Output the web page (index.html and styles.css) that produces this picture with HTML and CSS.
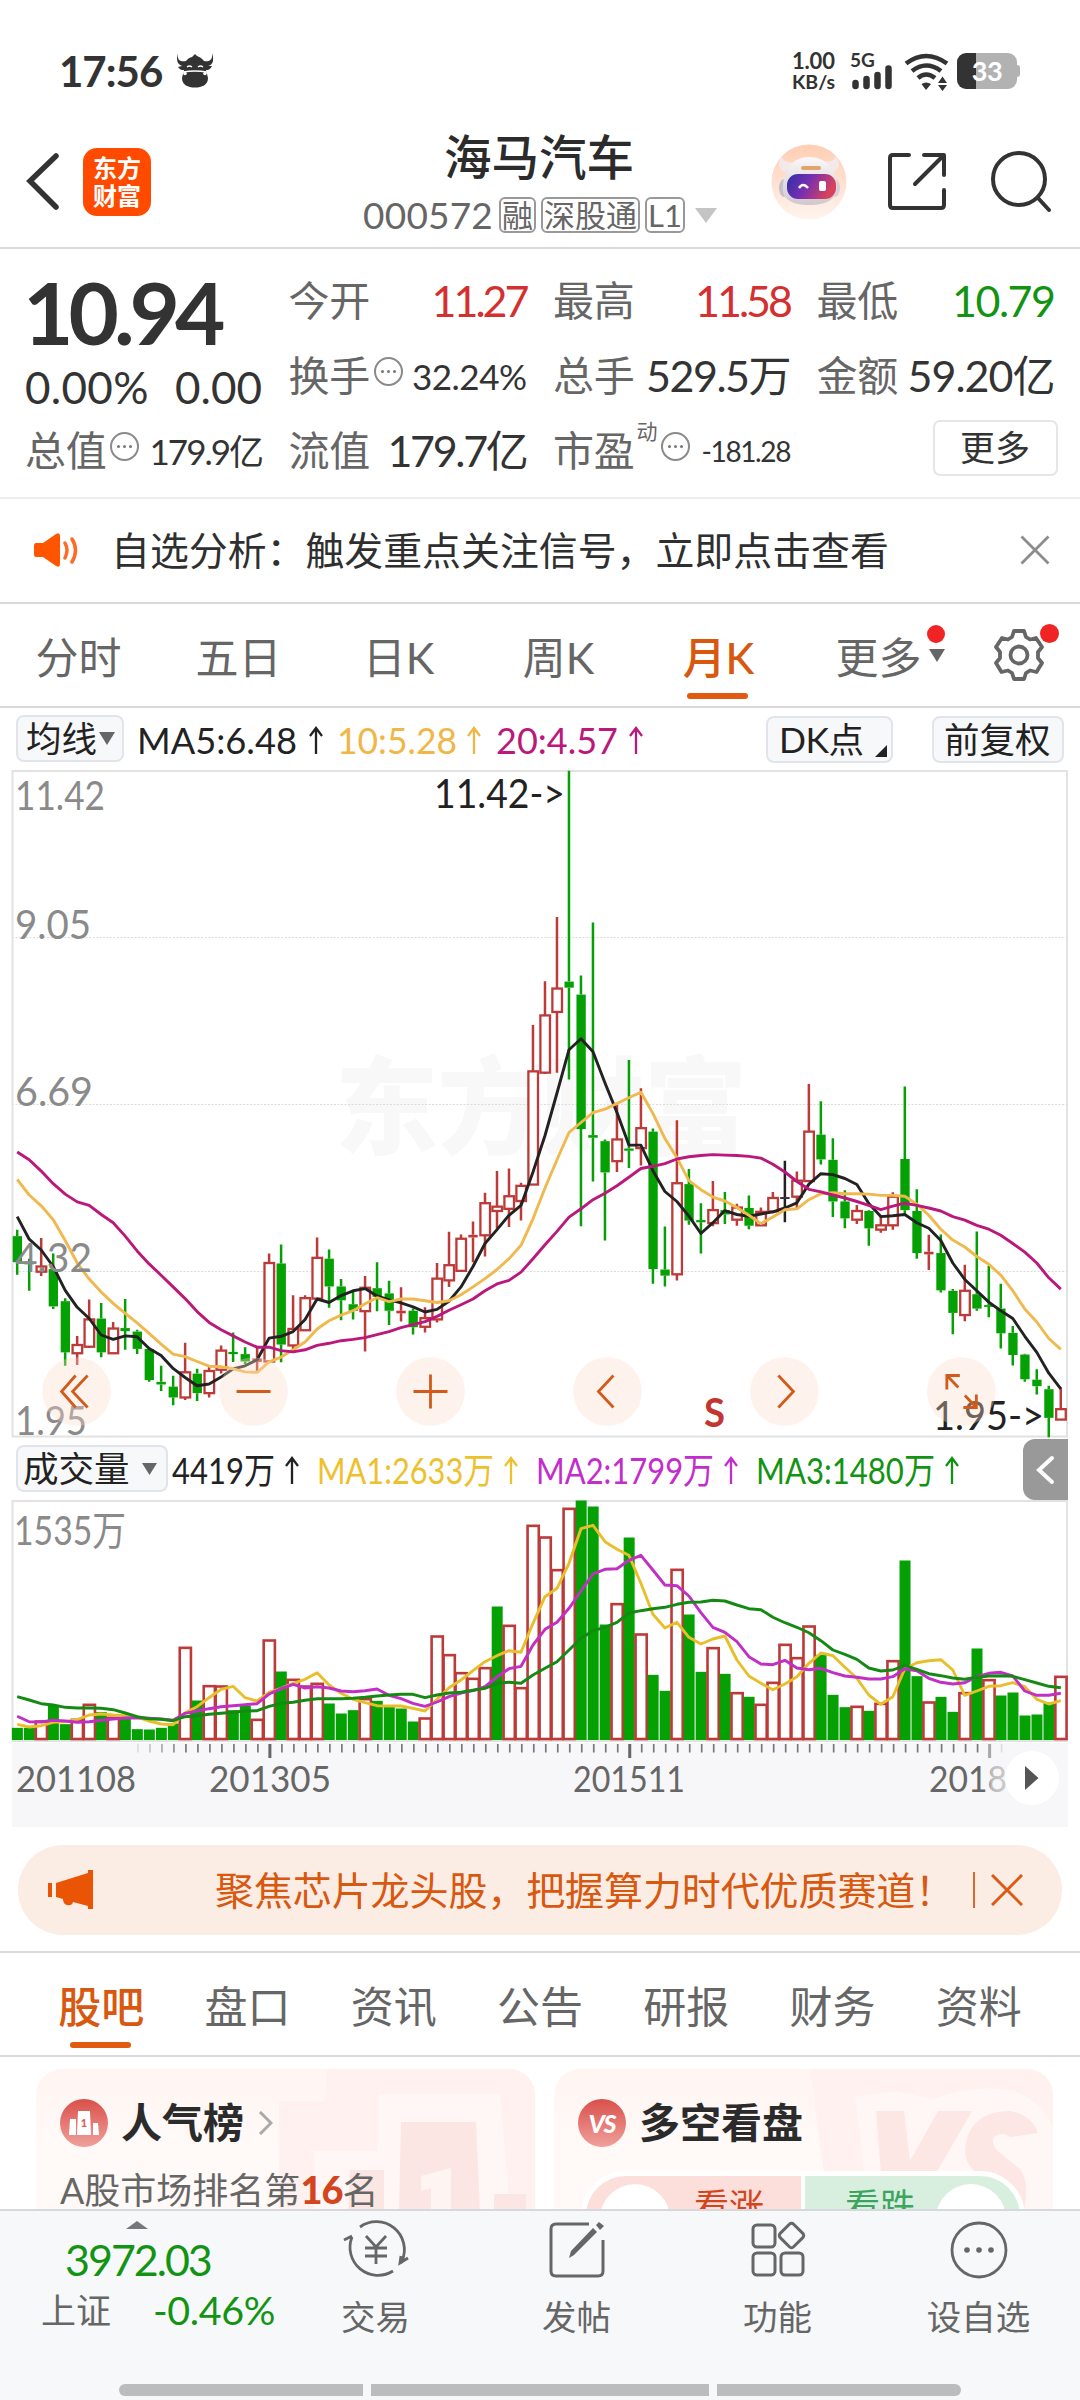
FILE: index.html
```html
<!DOCTYPE html>
<html lang="zh-CN">
<head>
<meta charset="utf-8">
<title>海马汽车 000572</title>
<link rel="stylesheet" href="styles.css">
</head>
<body>
<div class="app">

<header class="status">
  <div class="status-left">
    <span class="clock">17:56</span>
    <svg class="bull" width="36" height="36" viewBox="0 0 36 36" fill="#333">
      <path d="M1 0C0 7 3 9 9 8C13 3 15 5 16 3L18 1L20 3C22 4 24 4 27 8C33 9 36 6 35 0C38 8 35 12 31 13H35C33 17 31 17 29 17L31 25C31 32 25 34.500 18 34.500S5 32 5 25L7 17C5 17 3 17 1 14L5 13C0 11-1 7 1 0Z"/>
      <path d="M10 14Q12.500 12 15 14M21 14Q23.500 12 26 14M6 19Q18 17 30 19" stroke="#fff" fill="none" stroke-width="1.300"/>
      <circle cx="8" cy="20.500" r="1.800" fill="#fff"/><circle cx="28" cy="20.500" r="1.800" fill="#fff"/>
    </svg>
  </div>
  <div class="status-right">
    <div class="speed"><b>1.00</b><b>KB/s</b></div>
    <div class="signal"><b>5G</b>
      <svg width="42" height="26" viewBox="0 0 42 26" stroke="#333" stroke-width="6.500" stroke-linecap="round"><path d="M4.500 19V22M15.500 15V22M26.500 11V22M37.500 4.500V22"/></svg>
    </div>
    <svg class="wifi" width="46" height="38" viewBox="0 0 46 38" fill="none" stroke="#333" stroke-width="4.500">
      <path d="M2 10.500Q22 -4.500 43 10.500M8 18Q22 7 37 18M14 25Q22 18 31 25"/>
      <path d="M17.500 31Q22 28 27 31L22 37ZM34 30L38.500 23.500L43 30ZM34 32L38.500 38L43 32Z" fill="#333" stroke="none"/>
    </svg>
    <div class="battery"><b>33</b></div>
  </div>
</header>

<nav class="nav">
  <div class="nav-left">
    <svg width="36" height="60" viewBox="0 0 36 60" fill="none" stroke="#333" stroke-width="5.500" stroke-linecap="round"><path d="M31 4L5 29L31 55"/></svg>
    <div class="logo"><span>东方</span><span>财富</span></div>
  </div>
  <div class="nav-title">
    <div class="name">海马汽车</div>
    <div class="code"><span class="num">000572</span><i>融</i><i>深股通</i><i>L1</i><svg width="22" height="15"><path d="M0 0H22L11 15Z" fill="#c4c4c4"/></svg></div>
  </div>
  <div class="nav-right">
    <svg width="76" height="76" viewBox="0 0 76 76">
      <defs>
        <linearGradient id="halo" x1="0" y1="0" x2="0" y2="1"><stop offset="0" stop-color="#ffcdb3"/><stop offset="1" stop-color="#fff4ee"/></linearGradient>
        <linearGradient id="visor" x1="0" y1="0" x2="1" y2="0.300"><stop offset="0" stop-color="#2c2fa8"/><stop offset=".5" stop-color="#7a2fb0"/><stop offset="1" stop-color="#d8425c"/></linearGradient>
        <linearGradient id="shell" x1="0" y1="0" x2="0" y2="1"><stop offset="0" stop-color="#fbf8f8"/><stop offset="1" stop-color="#cfc8cf"/></linearGradient>
      </defs>
      <circle cx="38" cy="38" r="37.500" fill="url(#halo)"/>
      <path d="M11 12C6 18 7 26 14 28L22 18C16 19 12 17 11 12ZM64 12C70 18 69 26 62 28L54 17C60 18 63 17 64 12Z" fill="#f2e9e8"/>
      <ellipse cx="13" cy="44" rx="5" ry="9" fill="#c4bfca"/><ellipse cx="64" cy="44" rx="5" ry="9" fill="#d8d0d5"/>
      <path d="M38 13C55 13 65 25 66 42C67 55 55 61 39 61C22 61 10 56 12 42C13 25 22 13 38 13Z" fill="url(#shell)"/>
      <rect x="30" y="22" width="20" height="4" rx="2" fill="#e0a56a"/>
      <rect x="16" y="30" width="49" height="25" rx="11" fill="url(#visor)"/>
      <path d="M28 44Q32 38 37 44" stroke="#fff" stroke-width="2.500" fill="none"/><rect x="48" y="37" width="7" height="10" rx="2" fill="#fff"/>
    </svg>
    <svg width="60" height="60" viewBox="0 0 60 60" fill="none" stroke="#333" stroke-width="4" stroke-linecap="round" stroke-linejoin="round"><path d="M22 3H6Q3 3 3 6V53Q3 56 6 56H54Q57 56 57 53V38M37 3H57V23M56 4L28 32"/></svg>
    <svg width="62" height="62" viewBox="0 0 62 62" fill="none" stroke="#333" stroke-width="4" stroke-linecap="round"><circle cx="29" cy="28" r="26"/><path d="M48 47L59 59"/></svg>
  </div>
</nav>

<section class="quote">
  <div class="last">
    <div class="price">10.94</div>
    <div class="change"><span>0.00%</span><span>0.00</span></div>
  </div>
  <div class="cell"><label>今开</label><span class="v up">11.27</span></div>
  <div class="cell"><label>最高</label><span class="v up">11.58</span></div>
  <div class="cell"><label>最低</label><span class="v down">10.79</span></div>
  <div class="cell"><label>换手</label><em class="info"></em><span class="v mid">32.24%</span></div>
  <div class="cell"><label>总手</label><span class="v">529.5万</span></div>
  <div class="cell"><label>金额</label><span class="v wide">59.20亿</span></div>
  <div class="cell"><label>总值</label><em class="info"></em><span class="v mid2">179.9亿</span></div>
  <div class="cell"><label>流值</label><span class="v tight">179.7亿</span></div>
  <div class="cell"><label>市盈</label><sup>动</sup><em class="info"></em><span class="v small">-181.28</span></div>
  <div class="cell end"><span class="more">更多</span></div>
</section>

<section class="notice">
  <svg width="46" height="36" viewBox="0 0 46 36"><path d="M2 11Q0 11 0 14V22Q0 25 2 25H9L22 34Q26 36 26 32V4Q26 0 22 2L9 11Z" fill="#ff5500"/><path d="M31 11Q35 18 31 26M38 7Q45 18 38 30" stroke="#ff6a26" stroke-width="3.500" fill="none" stroke-linecap="round"/></svg>
  <span>自选分析：触发重点关注信号，立即点击查看</span>
  <svg width="30" height="30" viewBox="0 0 30 30" stroke="#8c8c8c" stroke-width="2.800"><path d="M1.500 1.500L28.500 28.500M28.500 1.500L1.500 28.500"/></svg>
</section>

<section class="periods">
  <span>分时</span><span>五日</span><span>日K</span><span>周K</span><span class="on">月K</span>
  <span class="drop">更多<svg width="16" height="13"><path d="M0 0H16L8 13Z" fill="#666"/></svg><i class="dot"></i></span>
  <span class="gear"><svg width="54" height="54" viewBox="0 0 54 54" fill="none" stroke="#666" stroke-width="3.800" stroke-linejoin="round"><path d="M22 3H32L34 9L38 11.500L44 10L50 19L46 24V30L50 35L44.500 44L38 42.500L34 45L32 51H22L20 45L16 42.500L9.500 44L4 35L8 30V24L4 19L10 10L16 11.500L20 9Z"/><circle cx="27" cy="27" r="8.500"/></svg><i class="dot"></i></span>
</section>

<section class="legend top">
  <span class="chip">均线<svg width="16" height="13"><path d="M0 0H16L8 13Z" fill="#666"/></svg></span>
  <svg class="legend-text" id="maLegend" width="520" height="46"></svg>
  <span class="chip dk">DK点<svg width="12" height="12"><path d="M12 0V12H0Z" fill="#222"/></svg></span>
  <span class="chip">前复权</span>
</section>

<svg id="kline" width="1080" height="668" viewBox="0 0 1080 668"></svg>

<section class="legend vol">
  <span class="chip">成交量<svg width="15" height="12"><path d="M0 0H15L7.500 12Z" fill="#666"/></svg></span>
  <svg class="legend-text" id="volLegend" width="800" height="46"></svg>
  <span class="fold"><svg width="20" height="30" viewBox="0 0 20 30" fill="none" stroke="#fff" stroke-width="4" stroke-linecap="round"><path d="M16 3L3 15L16 27"/></svg></span>
</section>

<svg id="volume" width="1080" height="327" viewBox="0 0 1080 327"></svg>

<section class="banner-wrap"><div class="banner">
  <svg width="46" height="40" viewBox="0 0 46 40" fill="#e95504"><path d="M0 13H4V27H0ZM8 13L40 3V0H45V39H40V36L25 32Q24 36 19 35Q15 34 15 29L8 27Z"/></svg>
  <span>聚焦芯片龙头股，把握算力时代优质赛道！</span>
  <i></i>
  <svg width="32" height="32" viewBox="0 0 32 32" stroke="#dc5a14" stroke-width="3"><path d="M1 1L31 31M31 1L1 31"/></svg>
</div></section>

<section class="tabs">
  <span class="on">股吧</span><span>盘口</span><span>资讯</span><span>公告</span><span>研报</span><span>财务</span><span>资料</span>
</section>

<section class="cards">
  <article class="card">
    <svg class="deco" width="499" height="142" viewBox="0 0 499 142">
      <path d="M291 0H499V142H243V32H289Z" fill="#fef1ef"/><path d="M278 82H342V25H464L474 142H278Z" fill="#fef7f5"/>
      <path d="M365 53H440L444 142H363ZM314 101H348V142H312ZM458 125H490V142H458Z" fill="#fce6e4"/>
      <path d="M385 107L415 99V142H395V119L385 122Z" fill="#fef5f3"/>
    </svg>
    <div class="card-head">
      <svg width="48" height="48" viewBox="0 0 48 48"><defs><linearGradient id="medal" x1="0" y1="0" x2="0" y2="1"><stop offset="0" stop-color="#d9504a"/><stop offset="1" stop-color="#f0a09b"/></linearGradient></defs><circle cx="24" cy="24" r="24" fill="url(#medal)"/><path d="M10 20H16V36H9ZM18 12H30L31 36H17ZM33 24H38L39 36H33Z" fill="#fff"/><text x="24" y="28" class="rank">1</text></svg>
      <h3>人气榜</h3>
      <svg width="15" height="24" viewBox="0 0 15 24" fill="none" stroke="#aaa" stroke-width="3"><path d="M2 1L13 12L2 23"/></svg>
    </div>
    <p>A股市场排名第<b>16</b>名</p>
  </article>
  <article class="card">
    <svg class="deco" width="499" height="142" viewBox="0 0 499 142">
      <path d="M256 0H499V142H275Z" fill="#fef1ef"/><path d="M301 28L340 22L380 30Q420 14 460 22Q490 32 499 60V142H315Z" fill="#fef7f5"/>
      <path d="M322 42H350L356 92L384 42H418L366 132L362 142H330ZM484 64L456 68Q448 62 440 68Q436 76 446 84L466 100Q476 112 470 142H440L443 118L420 102Q406 88 414 66Q424 42 456 42Q478 46 484 64Z" fill="#fce7e5"/>
    </svg>
    <div class="card-head">
      <svg width="48" height="48" viewBox="0 0 48 48"><circle cx="24" cy="24" r="24" fill="url(#medal)"/><text x="24" y="34" class="vs">VS</text></svg>
      <h3>多空看盘</h3>
    </div>
    <div class="poll"><div class="bull-side"><u></u>看涨</div><div class="bear-side">看跌<u></u></div></div>
  </article>
</section>

<footer class="dock">
  <div class="index">
    <svg class="caret" width="22" height="8"><path d="M0 8L11 0L22 8Z" fill="#77777b"/></svg>
    <div class="points">3972.03</div>
    <div class="delta"><span>上证</span><b>-0.46%</b></div>
  </div>
  <div class="act">
    <svg width="66" height="60" viewBox="0 0 66 60" fill="none" stroke="#666" stroke-width="2.800"><path d="M17 7A28 28 0 0 1 59 41L58 43M50 51A28 28 0 0 1 9 17M1 20L9 16M65 38L57 43L58 36"/><path d="M23 16L33 27L43 16M33 27V44M22 28H44M22 36H44" /></svg>
    <span>交易</span>
  </div>
  <div class="act">
    <svg width="60" height="60" viewBox="0 0 60 60" fill="none" stroke="#666" stroke-width="3"><path d="M42 4H9Q4 4 4 9V51Q4 56 9 56H51Q56 56 56 51V20"/><path d="M22 38L24 31L46 8L50 12L27 35ZM49 5L52 2L57 6L53 10Z" fill="#666" stroke="none"/></svg>
    <span>发帖</span>
  </div>
  <div class="act">
    <svg width="60" height="60" viewBox="0 0 60 60" fill="none" stroke="#666" stroke-width="3"><rect x="5" y="5" width="22" height="22" rx="4"/><rect x="5" y="33" width="22" height="22" rx="4"/><rect x="33" y="33" width="22" height="22" rx="4"/><rect x="34" y="6" width="19" height="19" rx="3" transform="rotate(45 43.500 15.500)"/></svg>
    <span>功能</span>
  </div>
  <div class="act">
    <svg width="60" height="60" viewBox="0 0 60 60" fill="none" stroke="#666" stroke-width="2.800"><circle cx="30" cy="30" r="27"/><g fill="#666" stroke="none"><circle cx="18" cy="30" r="2.800"/><circle cx="30" cy="30" r="2.800"/><circle cx="42" cy="30" r="2.800"/></g></svg>
    <span>设自选</span>
  </div>
</footer>
<div class="gesture"><i></i><i class="wide"></i><i></i></div>
</div>
<script src="chart.js"></script>
</body>
</html>
```
FILE: styles.css
```css
* { box-sizing: border-box; }
body {
  margin: 0;
  background: #fff;
  color: #333;
  font-family: Lato, "Noto Sans CJK SC", sans-serif;
}
svg { display: block; flex: none; }
i, em { font-style: normal; }
.app { width: 1080px; height: 2400px; overflow: hidden; position: relative; display: flex; flex-direction: column; }
.app > * { flex: none; }

/* status bar */
.status { height: 112px; padding: 30px 60px 0 59px; display: flex; justify-content: space-between; }
.status-left, .status-right { height: 82px; display: flex; align-items: center; }
.clock { font-size: 42px; font-weight: 700; letter-spacing: -1px; line-height: 82px; width: 118px; white-space: nowrap; }
.speed { display: flex; flex-direction: column; width: 44px; margin-right: 15px; }
.speed b { font-size: 19.500px; line-height: 21px; white-space: nowrap; }
.speed b:first-child { font-size: 22px; letter-spacing: -.2px; }
.signal { position: relative; width: 44px; height: 38px; margin-right: 9px; display: flex; align-items: flex-end; }
.signal b { position: absolute; left: -1px; top: -1px; font-size: 19px; line-height: 18px; }
.wifi { margin-right: 7px; margin-top: 2px; }
.battery { position: relative; width: 60px; height: 36px; margin-right: 3px; border-radius: 9px; background: linear-gradient(90deg, #333 19px, #b2b2b2 19px); color: #fff; text-align: center; }
.battery b { font-size: 27px; line-height: 36px; letter-spacing: -.5px; }
.battery::after { content: ""; position: absolute; right: -3px; top: 12px; width: 3px; height: 12px; border-radius: 0 3px 3px 0; background: #b2b2b2; }

/* title bar */
.nav { height: 137px; border-bottom: 2px solid #dadada; display: grid; grid-template-columns: 340px 400px 340px; }
.nav-left { display: flex; align-items: center; gap: 22px; padding: 0 0 0 25px; height: 139px; }
.logo { width: 68px; height: 68px; border-radius: 14px; background: #ff4a00; color: #fff; display: flex; flex-direction: column; align-items: center; justify-content: center; }
.logo span { font-size: 24px; line-height: 28px; height: 28px; font-weight: 700; }
.nav-title { display: flex; flex-direction: column; align-items: center; padding-top: 17px; }
.name { font-size: 47.500px; line-height: 56px; font-weight: 500; color: #2b2b2b; margin-left: -2px; }
.code { display: flex; align-items: center; color: #666; font-size: 32px; line-height: 36px; margin-top: 11px; height: 38px; }
.code .num { font-size: 37px; margin-right: 6px; letter-spacing: .2px; }
.code i { border: 2px solid #999; border-radius: 6px; height: 36px; line-height: 32px; font-size: 31px; padding: 0 1px; margin-right: 5px; }
.code svg { margin-left: 5px; }
.nav-right { display: flex; align-items: center; height: 139px; padding-left: 31px; }
.nav-right svg { margin-right: 40px; }
.nav-right svg + svg { margin-right: 43px; }

/* quote */
.quote { height: 250px; padding: 14px 25px 0 25px; border-bottom: 2px solid #ececec; display: grid; grid-template-columns: 237px 238px 237px 238px; grid-template-rows: 75px 75px 75px; column-gap: 26.500px; }
.last { grid-row: span 2; padding-top: 2px; }
.price { font-size: 87px; font-weight: 700; line-height: 94px; letter-spacing: -5px; margin-left: -2px; }
.change { display: flex; justify-content: space-between; font-size: 44px; line-height: 56px; }
.change span:first-child { letter-spacing: .3px; }
.cell { display: flex; align-items: center; height: 75px; white-space: nowrap; }
.cell label { font-size: 41px; color: #666; line-height: 60px; letter-spacing: -.3px; }
.v { margin-left: auto; font-size: 43px; line-height: 60px; letter-spacing: -1.500px; }
.up { color: #d3302f; }
.down { color: #129412; }
.v.up { letter-spacing: -3px; }
.v.wide { letter-spacing: -1px; }
.v.tight { letter-spacing: -2.300px; }
.v.mid { font-size: 35px; letter-spacing: -.5px; }
.v.mid2 { font-size: 35px; letter-spacing: -2px; }
.v.small { font-size: 28px; letter-spacing: -1.400px; padding-top: 0; }
.info { width: 29px; height: 29px; border: 2px solid #8a8a8a; border-radius: 50%; margin: -8px 0 0 4px; display: flex; align-items: center; justify-content: center; }
.info::before { content: ""; width: 3px; height: 3px; border-radius: 50%; background: #777; box-shadow: -6px 0 #777, 6px 0 #777; }
.cell sup { font-size: 21px; line-height: 22px; color: #666; align-self: flex-start; margin: 7px 0 0 2px; }
.end { justify-content: flex-end; }
.more { width: 125px; height: 56px; margin-right: -3px; margin-top: -6px; border: 2px solid #e6e6e6; border-radius: 7px; text-align: center; font-size: 35px; line-height: 51px; }

/* notice */
.notice { height: 105px; border-bottom: 2px solid #dadada; padding: 0 30px 2px 34px; display: flex; align-items: center; font-size: 38.900px; line-height: 60px; }
.notice span { margin: 1px auto 0 31px; color: #2f2f2f; }

/* period tabs */
.periods { height: 104px; border-bottom: 2px solid #dadada; display: flex; color: #666; font-size: 43px; line-height: 107px; }
.periods > span { position: relative; width: 160px; text-align: center; padding-right: 3px; }
.on { color: #d8580f; }
.periods .on { font-weight: 500; }
.on::after { content: ""; position: absolute; left: 50%; bottom: 7px; width: 61px; height: 6px; margin-left: -33px; border-radius: 3px; background: #e25a10; }
.drop svg { position: absolute; left: 129px; top: 45px; }
.dot { position: absolute; left: 127px; top: 21px; width: 18px; height: 18px; border-radius: 50%; background: #f02424; }
.periods > .gear { width: 120px; padding: 24px 0 0 32px; }
.gear .dot { left: 80px; top: 20px; width: 19px; height: 19px; }

/* chart legends */
.legend { display: flex; padding-left: 16px; }
.legend.top { height: 62px; padding-top: 7px; padding-right: 16px; }
.legend.vol { height: 62px; padding-top: 7px; }
.chip { height: 47px; border: 2px solid #e1e4ea; border-radius: 8px; background: #f7f8fa; color: #222; font-size: 35.500px; line-height: 42px; padding: 0 0 0 8px; display: flex; align-items: center; white-space: nowrap; }
.legend.top .chip { width: 108px; flex: none; }
.legend.top .chip svg { margin-left: 2px; }
.legend.top .dk { width: 127px; padding-left: 11px; margin: 1px 39px 0 122px; letter-spacing: -.5px; }
.legend.top .dk svg { align-self: flex-end; margin: 0 0 4px 11px; }
.legend.top .chip:last-child { width: 132px; margin-top: 1px; padding-left: 10px; }
.vol .chip { width: 152px; padding-left: 5px; }
.vol .chip svg { margin-left: 12px; }
.legend text { font-size: 36px; }
.fold { width: 45px; height: 61px; margin-left: auto; margin-right: 12px; margin-top: -6px; background: #999; border-radius: 12px 0 0 12px; display: flex; align-items: center; justify-content: center; }
#kline { overflow: visible; }
.axis { font-size: 40px; fill: #8a8a8a; }
.mark { font-size: 40px; fill: #222; }
.sell { font-size: 40px; font-weight: 700; fill: #c23531; }
.watermark { font-family: "Noto Sans CJK SC", sans-serif; font-size: 106px; font-weight: 900; fill: #f8f8f8; }
.date { font-size: 37px; fill: #666; }

/* banner */
.banner-wrap { height: 126px; border-bottom: 2px solid #dadada; padding: 18px 18px 0; }
.banner { height: 90px; border-radius: 45px; background: #fcede4; display: flex; align-items: center; padding-left: 30px; color: #d8580f; font-size: 39px; line-height: 60px; }
.banner span { width: 758px; margin-left: 121px; white-space: nowrap; letter-spacing: -.1px; }
.banner i { width: 2px; height: 36px; background: #d8682c; margin-right: 16px; }

/* content tabs */
.tabs { height: 104px; border-bottom: 2px solid #dadada; padding: 0 28px; display: flex; color: #666; font-size: 43px; line-height: 108px; }
.tabs span { flex: 1; text-align: center; position: relative; }
.tabs .on { font-weight: 500; }
.tabs .on::after { margin-left: -31px; bottom: 7px; }

/* cards */
.cards { height: 152px; padding: 12px 28px 0 36px; display: flex; gap: 19px; overflow: hidden; }
.card { position: relative; width: 499px; flex: none; height: 240px; border-radius: 26px; background: linear-gradient(180deg, #fff5f2, #fffaf8 90px, #fffaf8); overflow: hidden; padding: 26px 0 0 24px; }
.deco { position: absolute; left: 0; top: 0; }
.card-head { position: relative; display: flex; align-items: center; height: 56px; }
.card h3 { margin: 0 14px 0 13px; font-size: 41px; line-height: 56px; font-weight: 700; color: #2b2b2b; }
.card p { position: relative; margin: 8px 0 0; font-size: 36px; line-height: 60px; color: #666; white-space: nowrap; }
.card p b { color: #d2451e; font-size: 38px; font-weight: 900; letter-spacing: -1px; }
.rank { font-size: 11px; font-weight: 900; fill: #d9605a; text-anchor: middle; }
.vs { font-size: 25px; font-weight: 900; font-style: italic; fill: #fff; text-anchor: middle; letter-spacing: -1px; }
.poll { position: absolute; left: 27px; top: 102px; width: 444px; height: 90px; border: 5px solid #fff; border-radius: 46px; display: flex; gap: 4px; background: #fff; overflow: hidden; font-size: 35px; line-height: 59px; }
.poll div { flex: 1; display: flex; }
.poll u { width: 70px; height: 70px; border-radius: 50%; background: #fff; margin-top: 8px; }
.bull-side { background: #fcdeda; color: #d2451e; padding-left: 14px; gap: 24px; }
.bear-side { background: #d8efdf; color: #3da45f; justify-content: flex-end; padding-right: 14px; gap: 21px; }

/* dock */
.dock { height: 168px; border-top: 2px solid #d6d8dc; background: #f6f8fa; display: flex; color: #666; }
.index { width: 275px; padding: 10px 0 0 41px; }
.caret { margin-left: 85px; }
.points { margin: 3px 0 0 24px; font-size: 43px; line-height: 56px; letter-spacing: -2px; color: #129412; }
.delta { display: flex; justify-content: space-between; align-items: center; font-size: 35px; line-height: 40px; height: 44px; }
.delta b { font-weight: 400; font-size: 39.500px; letter-spacing: -.4px; color: #129412; }
.act { width: 201px; display: flex; flex-direction: column; align-items: center; padding-top: 9px; font-size: 34.500px; }
.act span { line-height: 50px; margin-top: 12px; }
.gesture { height: 22px; flex: 1; background: #f6f8fa; display: flex; gap: 8px; padding: 7px 119px 0; }
.gesture i { width: 244px; height: 12px; background: #bbbcbe; border-radius: 6px 0 0 6px; }
.gesture .wide { width: 338px; border-radius: 0; }
.gesture i:last-child { border-radius: 0 6px 6px 0; }
```
FILE: chart.js
```js
// Monthly candles: direction, high, body top, body bottom, low (chart units).
const candles = `G1083,1098,1158,1187 G1150,1157,1163,1224 R1102,1168,1180,1190 G1138,1174,1260,1266 G1241,1248,1366,1397
R1328,1349,1368,1395 R1244,1290,1353,1356 G1252,1288,1366,1377 R1296,1311,1368,1368 G1243,1310,1317,1360
G1314,1318,1358,1370 G1355,1358,1430,1434 G1397,1434,1440,1455 G1420,1445,1470,1488 R1344,1412,1470,1476
G1404,1415,1460,1478 R1400,1409,1460,1470 R1350,1362,1406,1415 G1320,1365,1370,1388 G1354,1370,1387,1393
R1355,1380,1388,1410 R1138,1160,1387,1387 G1117,1161,1348,1389 R1234,1312,1350,1358 R1234,1241,1315,1317
R1101,1148,1242,1242 G1129,1150,1214,1263 G1197,1214,1246,1292 G1225,1255,1270,1290 R1190,1217,1271,1364
G1158,1218,1238,1271 G1201,1230,1270,1303 R1216,1270,1276,1295 G1265,1270,1308,1325 R1262,1287,1307,1320
R1160,1196,1290,1297 R1088,1165,1200,1215 R1094,1104,1178,1178 R1064,1095,1101,1158 R998,1022,1096,1145
R948,1030,1040,1080 R942,1006,1035,1077 R975,982,1017,1062 R611,718,979,979 R510,589,721,724
R362,527,581,721 G25,511,525,737 G497,541,851,1075 G375,865,871,972 G875,879,951,1108
R795,875,925,950 G692,896,901,941 R757,849,895,935 G850,857,1174,1208 G1076,1175,1189,1214
R831,976,1186,1200 G943,978,1062,1072 G1022,1061,1066,1138 R971,1038,1068,1075 G996,1038,1048,1070
R1023,1032,1060,1074 G1004,1033,1074,1082 R1032,1042,1073,1073 R996,1010,1041,1045 K924,1008,1012,1066
R949,970,1007,1035 R747,857,971,971 G787,864,921,933 G872,922,1018,1054 G992,1018,1057,1080
R1026,1040,1060,1070 G1038,1040,1080,1120 R1050,1073,1083,1090 R997,1007,1073,1083 G753,920,1038,1050
G990,1040,1137,1150 R1095,1134,1140,1176 G1094,1137,1223,1228 G1220,1224,1275,1324 R1164,1224,1280,1294
G1087,1232,1265,1270 G1166,1257,1261,1285 G1208,1265,1322,1357 G1305,1321,1372,1396 G1369,1371,1428,1434
G1405,1429,1444,1463 G1443,1451,1517,1562 R1447,1497,1521,1521`.split(/\s+/);

const ma5 = [1053,1105,1130,1168,1223,1262,1288,1326,1336,1328,1330,1357,1373,1403,1424,1443,1439,1423,1404,1397,1383,1333,1329,1318,1290,1243,1251,1235,1224,1219,1236,1245,1252,1261,1273,1267,1248,1215,1168,1115,1083,1050,1027,950,866,768,668,643,673,745,813,888,888,947,995,1018,1052,1092,1067,1039,1048,1052,1047,1042,1033,1021,978,954,956,965,979,1023,1053,1051,1048,1067,1080,1108,1160,1198,1224,1250,1270,1288,1329,1366,1414,1450];
const ma10 = [967,1003,1028,1060,1108,1160,1197,1227,1253,1276,1298,1322,1347,1370,1376,1387,1398,1399,1404,1411,1412,1388,1377,1360,1342,1312,1293,1280,1270,1254,1240,1249,1243,1243,1247,1251,1247,1233,1215,1196,1175,1150,1119,1058,987,922,859,836,813,805,792,779,766,815,873,917,970,991,1008,1017,1032,1050,1069,1054,1037,1035,1014,1000,998,1000,1000,1001,1004,1004,1006,1024,1050,1082,1107,1123,1145,1163,1188,1224,1266,1296,1334,1359];
const ma20 = [904,922,948,977,1001,1019,1027,1048,1067,1098,1132,1162,1188,1215,1242,1272,1297,1314,1328,1342,1354,1354,1362,1365,1360,1350,1345,1339,1336,1332,1325,1318,1309,1302,1295,1283,1269,1256,1243,1224,1208,1200,1181,1150,1118,1087,1054,1035,1014,999,982,962,942,937,931,920,915,912,910,911,912,914,918,932,950,972,990,996,1003,1010,1018,1027,1037,1029,1022,1027,1033,1040,1053,1061,1073,1082,1096,1115,1135,1160,1194,1220];

const volumes = "G895 G895 R873 G829 G884 R868 R823 G848 R862 G867 G899 G900 G895 G882 R652 G813 R767 R768 G842 G829 R868 R630 G726 R748 R768 R760 G822 G852 G842 R806 G814 G832 G837 G876 R864 R618 R674 R728 R745 R713 G531 R586 R773 R286 R321 R419 R235 G213 G231 G585 R521 G324 R612 G736 G784 R418 G555 G727 R653 G733 R788 G802 R823 R757 R643 R683 R588 G676 G796 G833 R829 G844 R820 R692 G393 G740 R816 G802 G847 R788 G657 R749 G798 G789 G858 G855 G819 R739".split(" ");
const vma1 = [883,891,887,877,875,869,855,852,855,857,861,873,882,884,848,830,803,778,769,803,813,787,775,760,748,728,765,790,808,818,827,828,828,835,843,808,773,750,722,695,677,662,667,580,500,475,400,296,286,335,358,376,460,553,594,577,622,642,627,618,690,738,760,779,762,740,700,669,677,712,745,795,823,800,716,698,692,689,720,796,783,769,767,758,770,808,822,812];
const vma2 = [859,875,876,871,873,877,875,871,867,864,863,865,867,871,850,843,836,830,827,824,821,792,776,763,774,770,774,783,785,782,777,796,806,820,829,816,800,789,782,770,741,716,709,645,598,577,535,483,432,418,416,391,376,420,465,467,498,548,592,607,635,680,702,704,691,714,719,715,728,738,742,747,747,740,716,722,745,757,762,758,740,730,727,738,783,796,796,790];
const vma3 = [800,810,821,825,832,834,834,835,839,849,860,866,868,872,860,857,853,850,847,843,842,829,820,817,811,806,806,806,805,802,798,795,793,793,803,795,789,787,781,775,760,757,760,735,715,695,660,625,602,592,577,549,542,536,532,523,517,516,511,513,525,536,539,562,578,592,608,632,660,673,688,714,723,720,706,718,731,737,744,748,742,738,737,739,749,759,769,773];

const GREEN = "#04a004", RED = "#bd3a38", BLACK = "#222";
const x = i => 17.2 + i * 11.995;
const y = v => v / 2.306 - 10;
const vy = v => v / 3 - 70;
const line = (data, f, color) =>
  `<polyline points="${data.map((v, i) => x(i).toFixed(1) + "," + f(v).toFixed(1)).join(" ")}" fill="none" stroke="${color}" stroke-width="2.9" stroke-linejoin="round"/>`;
const label = (cls, tx, ty, w, s, fill) =>
  `<text class="${cls}" x="${tx}" y="${ty}" textLength="${w}" lengthAdjust="spacingAndGlyphs"${fill ? ` fill="${fill}"` : ""}>${s}</text>`;

// Price chart
let k = label("watermark", 335, 376, 412, "东方财富");
[167, 334, 501].forEach(g => k += `<path d="M12 ${g + .5}H1067" stroke="#dcdcdc" stroke-dasharray="2 1.5"/>`);
k += `<rect x="12.5" y="1" width="1054.500" height="665.500" fill="none" stroke="#e2e2e2" stroke-width="2"/>`;
candles.forEach((c, i) => {
  const [hi, top, bot, lo] = c.slice(1).split(",").map(n => y(+n));
  const cx = x(i), col = c[0] === "G" ? GREEN : c[0] === "R" ? RED : BLACK;
  k += `<path d="M${cx} ${hi}V${top}M${cx} ${bot}V${lo}" stroke="${col}" stroke-width="2.500"/>`;
  if (bot - top < 3.5) k += `<rect x="${cx - 4.7}" y="${top}" width="9.400" height="${Math.max(1.8, bot - top)}" fill="${col}"/>`;
  else if (c[0] === "R") k += `<rect x="${cx - 4.6}" y="${top}" width="9.600" height="${bot - top}" fill="#fff" stroke="${col}" stroke-width="2.300"/>`;
  else k += `<rect x="${cx - 4.5}" y="${top}" width="9.300" height="${bot - top}" fill="${col}"/>`;
});
k += line(ma5, y, BLACK) + line(ma10, y, "#efb94e") + line(ma20, y, "#ba187b");
k += label("axis", 15, 40, 90, "11.42") + label("axis", 15, 169, 76, "9.05") + label("axis", 15, 336, 78, "6.69") + label("axis", 15, 502, 77, "4.32") + label("axis", 15, 665, 72, "1.95");
k += label("mark", 434, 38, 131, "11.42-&gt;") + label("sell", 704, 657, 21, "S") + label("mark", 933, 660, 111, "1.95-&gt;");
const icons = [
  "M-1 -16L-15 0L-1 16M11 -16L-4 0L11 16", "M-17 0H17", "M-17 0H17M0 -17V17", "M6 -16L-9 0L6 16", "M-6 -16L9 0L-6 16",
  "M-1.500 -16H-14.500V-2M-14 -15.500L-3 -4M15 3V16H2M14.500 15.500L3.500 4"
];
icons.forEach((d, n) => k += `<g transform="translate(${76.6 + n * 176.95} 621.500)"><circle r="34.300" fill="#fbd9c8" fill-opacity=".35"/><path d="${d}" fill="none" stroke="#d25a1a" stroke-width="2.800"/></g>`);
document.getElementById("kline").innerHTML = k;

// Volume chart and time axis; the strip below carries one tick per month
let v = `<rect x="12.500" y="1" width="1054.500" height="240" fill="none" stroke="#e2e2e2" stroke-width="2"/><rect x="12" y="243" width="1056" height="84" fill="#f7f7fa"/>`;
volumes.forEach((b, i) => {
  const t = vy(+b.slice(1)) - 0.5, cx = x(i);
  v += b[0] === "G"
    ? `<rect x="${cx - 5.300}" y="${t}" width="11" height="${240 - t}" fill="${GREEN}"/>`
    : `<rect x="${cx - 5.400}" y="${t + 1}" width="11.200" height="${239 - t - 1}" fill="#fff" stroke="${RED}" stroke-width="2.600"/>`;
});
v += line(vma1, vy, "#e8bf2a") + line(vma2, vy, "#c12fc4") + line(vma3, vy, "#148a14");
v += label("axis", 14, 45, 112, "1535万");
for (let i = 10; i <= 82; i++) {
  const major = i % 30 === 21, fade = i < 14 ? (i - 9) * .2 : i > 81 ? .2 : i > 80 ? .55 : 1;
  v += `<path d="M${x(i) + .8} 244V${major ? 258 : 252.5}" stroke="${major ? "#666" : "#777"}" stroke-width="${major ? 3 : 1.7}" opacity="${fade}"/>`;
}
v += label("date", 16, 292, 120, "201108") + label("date", 209, 292, 122, "201305") + label("date", 573, 292, 112, "201511");
v += `<defs><linearGradient id="fade"><stop offset=".1" stop-color="#666"/><stop offset=".75" stop-color="#666"/><stop offset=".8" stop-color="#bbb"/><stop offset="1" stop-color="#ccc"/></linearGradient></defs><text class="date" x="929" y="292" textLength="78" lengthAdjust="spacingAndGlyphs" style="fill:url(#fade)">2018</text>`;
v += `<circle cx="1032" cy="278" r="27" fill="#fff"/><path d="M1025 266L1038.500 278L1025 290Z" fill="#555"/>`;
document.getElementById("volume").innerHTML = v;

// Legends: text, left, width, arrow centre, colour
const legend = (id, left, rows, base) => {
  document.getElementById(id).innerHTML = rows.map(([s, l, w, a, c]) =>
    `<g transform="translate(${-left} 0)">${label("lg", l, base, w, s, c)}<path d="M${a} ${base}V${base - 25}M${a - 6} ${base - 18}L${a} ${base - 26}L${a + 6} ${base - 18}" fill="none" stroke="${c}" stroke-width="2.300"/></g>`).join("");
};
legend("maLegend", 124, [
  ["MA5:6.48", 137, 160, 316, "#222"], ["10:5.28", 337, 120, 474, "#f0b646"], ["20:4.57", 496, 122, 636, "#ba187b"]], 39);
legend("volLegend", 168, [
  ["4419万", 172, 103, 292, "#222"], ["MA1:2633万", 317, 177, 511, "#edc12e"], ["MA2:1799万", 536, 178, 731, "#c32dcc"], ["MA3:1480万", 756, 179, 952, "#129412"]], 39);
```
